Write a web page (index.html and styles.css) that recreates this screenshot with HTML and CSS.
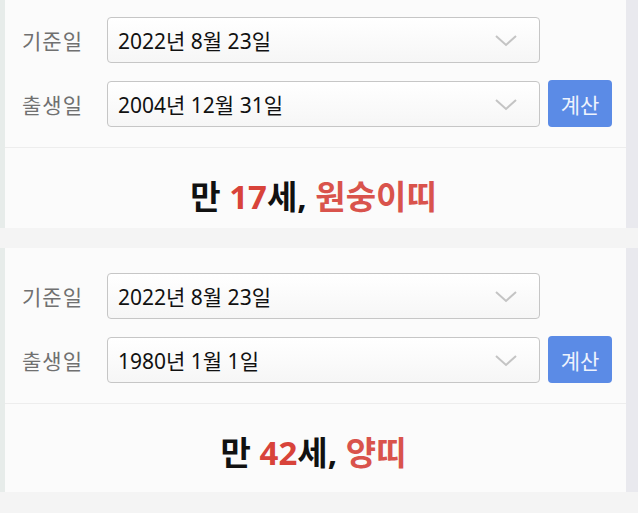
FILE: index.html
```html
<!DOCTYPE html>
<html lang="ko">
<head>
    <meta charset="UTF-8">
    <meta name="viewport" content="width=device-width, initial-scale=1.0">
    <title>만 나이 계산기</title>
    <link rel="stylesheet" href="styles.css">
</head>
<body>
    <div class="panel first">
        <div class="form">
            <div class="row">
                <label class="label">기준일</label>
                <div class="select">
                    <span>2022년 8월 23일</span>
                    <svg class="chevron" width="22" height="12" viewBox="0 0 22 12"><path d="M1 1 L11 10 L21 1" fill="none" stroke="#c4c4c4" stroke-width="2"/></svg>
                </div>
            </div>
            <div class="row">
                <label class="label">출생일</label>
                <div class="select">
                    <span>2004년 12월 31일</span>
                    <svg class="chevron" width="22" height="12" viewBox="0 0 22 12"><path d="M1 1 L11 10 L21 1" fill="none" stroke="#c4c4c4" stroke-width="2"/></svg>
                </div>
                <button class="btn">계산</button>
            </div>
        </div>
        <div class="result">
            만 <span class="num">17</span>세, <span class="zodiac">원숭이띠</span>
        </div>
    </div>

    <div class="panel second">
        <div class="form">
            <div class="row">
                <label class="label">기준일</label>
                <div class="select">
                    <span>2022년 8월 23일</span>
                    <svg class="chevron" width="22" height="12" viewBox="0 0 22 12"><path d="M1 1 L11 10 L21 1" fill="none" stroke="#c4c4c4" stroke-width="2"/></svg>
                </div>
            </div>
            <div class="row">
                <label class="label">출생일</label>
                <div class="select">
                    <span>1980년 1월 1일</span>
                    <svg class="chevron" width="22" height="12" viewBox="0 0 22 12"><path d="M1 1 L11 10 L21 1" fill="none" stroke="#c4c4c4" stroke-width="2"/></svg>
                </div>
                <button class="btn">계산</button>
            </div>
        </div>
        <div class="result">
            만 <span class="num">42</span>세, <span class="zodiac">양띠</span>
        </div>
    </div>
</body>
</html>
```

FILE: styles.css
```css
body, html {
    margin: 0;
    padding: 0;
    font-family: "Noto Sans", "Noto Sans CJK KR", sans-serif;
    background-color: #f4f4f4;
    color: #111;
    overflow: hidden;
}

.panel {
    background-color: #fbfbfb;
    border-left: 5px solid #e7ecea;
    border-right: 12px solid #e9e9ee;
}

.panel.first {
    margin-top: -8px;
    height: 236px;
}

.panel.second {
    margin-top: 20px;
    height: 244px;
}

.form {
    padding: 24px 0 20px 17px;
    border-bottom: 1px solid #ededed;
    display: flex;
    flex-direction: column;
    gap: 17px;
}

.row {
    display: flex;
    align-items: center;
    height: 47px;
}

.label {
    width: 85px;
    font-size: 21px;
    color: #707070;
    letter-spacing: 1px;
}

.select {
    height: 44px;
    border: 1px solid #c6c6c6;
    border-radius: 4px;
    background: linear-gradient(to bottom, #ffffff, #f6f6f6);
    display: flex;
    align-items: center;
    justify-content: space-between;
    padding: 0 22px 0 10px;
    box-sizing: content-box;
    width: 399px;
    font-size: 21px;
    color: #111;
}

.chevron {
    margin-top: 2px;
}

.btn {
    margin-left: 8px;
    width: 64px;
    height: 47px;
    border: none;
    border-radius: 4px;
    background-color: #5b8be6;
    color: #eef3fd;
    font-family: inherit;
    font-size: 21px;
    padding: 0;
}

.result {
    text-align: center;
    font-size: 33px;
    font-weight: bold;
    padding-top: 26px;
    line-height: 46px;
    padding-right: 4px;
}

.num {
    color: #d8433a;
}

.zodiac {
    color: #d9534c;
    font-weight: 600;
}
```
